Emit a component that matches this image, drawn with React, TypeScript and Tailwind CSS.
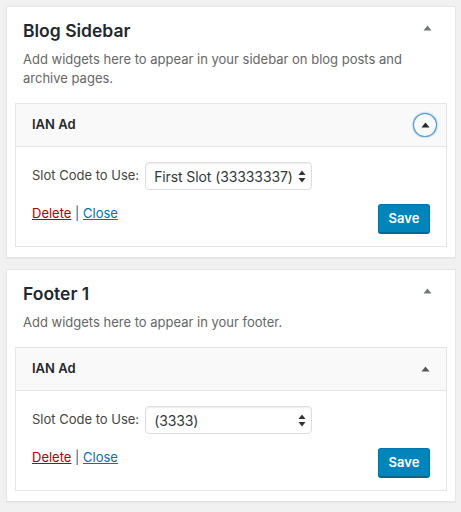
import React from 'react';

type Widget = {
  title: string;
  slot: string;
  focused?: boolean;
};

type Sidebar = {
  name: string;
  description: string;
  widget: Widget;
};

const sidebars: Sidebar[] = [
  {
    name: 'Blog Sidebar',
    description: 'Add widgets here to appear in your sidebar on blog posts and archive pages.',
    widget: { title: 'IAN Ad', slot: 'First Slot (33333337)', focused: true },
  },
  {
    name: 'Footer 1',
    description: 'Add widgets here to appear in your footer.',
    widget: { title: 'IAN Ad', slot: '(3333)' },
  },
];

function Triangle({ className }: { className: string }) {
  return (
    <svg width="9" height="6" viewBox="0 0 9 6" className={className}>
      <path d="M4.5 0.5 L8.5 5.5 L0.5 5.5 Z" fill="currentColor" />
    </svg>
  );
}

function SelectArrows() {
  return (
    <svg width="8" height="13" viewBox="0 0 8 13" className="shrink-0 text-[#333]">
      <path d="M4 0.5 L7.5 5 L0.5 5 Z" fill="currentColor" />
      <path d="M4 12.5 L7.5 8 L0.5 8 Z" fill="currentColor" />
    </svg>
  );
}

function WidgetBox({ widget }: { widget: Widget }) {
  return (
    <div className="mx-[8px] border border-[#e5e5e5] bg-white">
      {/* widget header */}
      <div className="flex h-[43px] items-center justify-between border-b border-[#e5e5e5] bg-[#f9f9f9] pl-[16px] pr-[10px]">
        <h3 className="text-[13px] font-semibold text-[#23282d]">{widget.title}</h3>
        {widget.focused ? (
          <div className="flex h-[22px] w-[22px] items-center justify-center rounded-full shadow-[0_0_0_1px_#5b9dd9,0_0_2px_1px_rgba(30,140,190,0.8)]">
            <Triangle className="text-[#23282d]" />
          </div>
        ) : (
          <div className="flex h-[22px] w-[22px] items-center justify-center">
            <Triangle className="text-[#555]" />
          </div>
        )}
      </div>

      {/* widget body */}
      <div className="px-[16px] pb-[13px] pt-[15px]">
        <div className="flex items-center gap-[6px]">
          <span className="whitespace-nowrap text-[13px] text-[#444]">Slot Code to Use:</span>
          <div className="flex h-[28px] w-[167px] shrink-0 items-center justify-between rounded-[4px] border border-[#ddd] bg-white pl-[8px] pr-[5px] shadow-[inset_0_1px_2px_rgba(0,0,0,0.07)]">
            <span className="whitespace-nowrap text-[14px] tracking-[-0.1px] text-[#32373c]">{widget.slot}</span>
            <SelectArrows />
          </div>
        </div>

        <div className="mt-[12px] flex items-start justify-between">
          <div className="mt-[2px] text-[13px] leading-[19px] text-[#555]">
            <a href="#" className="text-[#a00] underline">Delete</a>
            <span> | </span>
            <a href="#" className="text-[#0073aa] underline">Close</a>
          </div>
          <button className="mt-[2px] h-[29px] w-[52px] rounded-[3px] border border-[#0073aa] border-b-[#006799] bg-[#0085ba] text-[13px] font-semibold text-white shadow-[0_1px_0_#006799]">
            Save
          </button>
        </div>
      </div>
    </div>
  );
}

function SidebarCard({ sidebar }: { sidebar: Sidebar }) {
  return (
    <div className="w-[450px] border border-[#e5e5e5] bg-white pb-[10px] shadow-[0_1px_1px_rgba(0,0,0,0.04)]">
      <div className="flex items-start justify-between pl-[16px] pr-[23px] pt-[12px]">
        <h2 className="text-[17.5px] font-semibold leading-[24px] text-[#23282d]">{sidebar.name}</h2>
        <Triangle className="mt-[6px] text-[#72777c]" />
      </div>
      <p className="mb-[15px] mt-[7px] pl-[16px] pr-[30px] text-[13px] leading-[19px] text-[#666]">
        {sidebar.description}
      </p>
      <WidgetBox widget={sidebar.widget} />
    </div>
  );
}

export default function App() {
  return (
    <div
      className="min-h-screen bg-[#f1f1f1] pl-[6px] pt-[6px]"
      style={{ fontFamily: 'Inter, "Liberation Sans", Arial, sans-serif' }}
    >
      <div className="flex flex-col gap-[11px]">
        {sidebars.map((s) => (
          <SidebarCard key={s.name} sidebar={s} />
        ))}
      </div>
    </div>
  );
}
